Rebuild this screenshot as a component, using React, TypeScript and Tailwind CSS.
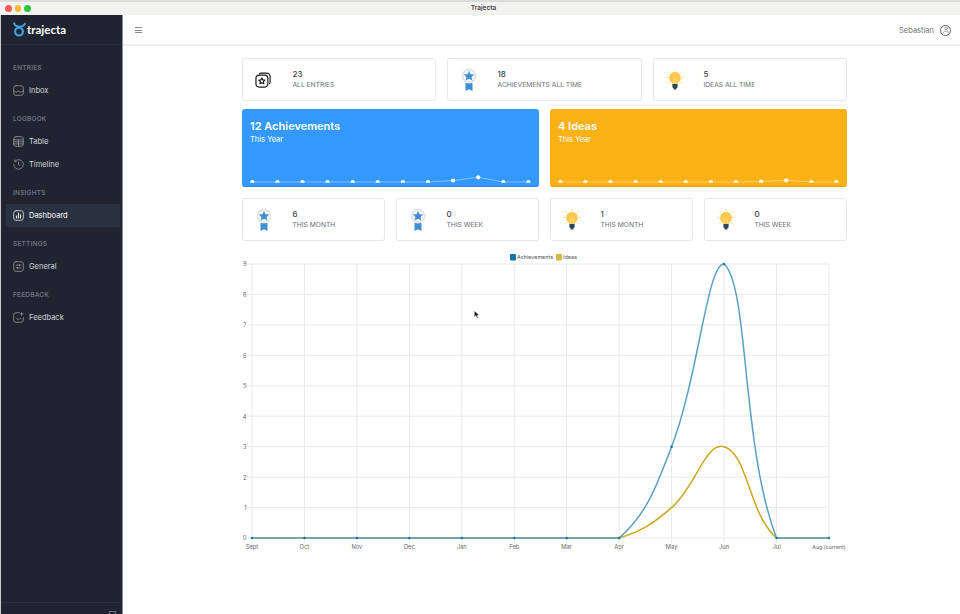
import { User } from "lucide-react";

const font = "font-['Inter','Liberation_Sans',sans-serif]";

type Pt = [number, number];

const months = ["Sept", "Oct", "Nov", "Dec", "Jan", "Feb", "Mar", "Apr", "May", "Jun", "Jul", "Aug (current)"];
const achievements = [0, 0, 0, 0, 0, 0, 0, 0, 3, 9, 0, 0];
const ideas = [0, 0, 0, 0, 0, 0, 0, 0, 1, 3, 0, 0];

const chartX = (i: number) => 10 + i * 52.45;
const chartY = (v: number) => 288 - v * 30.44;

// same spline as chart.js, control points capped to the plot area
function spline(pts: Pt[], minY: number, maxY: number) {
  let d = `M${pts[0][0]} ${pts[0][1]}`;
  const ctrl = pts.map((p, i) => {
    const prev = pts[Math.max(i - 1, 0)];
    const next = pts[Math.min(i + 1, pts.length - 1)];
    const d01 = Math.hypot(p[0] - prev[0], p[1] - prev[1]);
    const d12 = Math.hypot(next[0] - p[0], next[1] - p[1]);
    const total = d01 + d12 || 1;
    const fa = (0.4 * d01) / total;
    const fb = (0.4 * d12) / total;
    const cap = (v: number) => Math.min(maxY, Math.max(minY, v));
    return {
      a: [p[0] - fa * (next[0] - prev[0]), cap(p[1] - fa * (next[1] - prev[1]))],
      b: [p[0] + fb * (next[0] - prev[0]), cap(p[1] + fb * (next[1] - prev[1]))],
    };
  });
  for (let i = 1; i < pts.length; i++) {
    d += `C${ctrl[i - 1].b[0]} ${ctrl[i - 1].b[1]} ${ctrl[i].a[0]} ${ctrl[i].a[1]} ${pts[i][0]} ${pts[i][1]}`;
  }
  return d;
}

function Logo() {
  return (
    <svg viewBox="0 0 13 15" className="w-[13px] h-[15px] shrink-0" fill="none">
      <circle cx="6" cy="9.6" r="3.9" stroke="#3f9fe0" strokeWidth="2.2" />
      <path d="M1 1.4c1 2.4 3.2 3.2 5.4 3.4 2.4.2 4.2-.8 5.6-3" stroke="#3f9fe0" strokeWidth="2" strokeLinecap="round" />
    </svg>
  );
}

function NavIcon({ name }: { name: string }) {
  const common = { fill: "none", stroke: "currentColor", strokeWidth: 1.1, strokeLinecap: "round" as const, strokeLinejoin: "round" as const };
  return (
    <svg viewBox="0 0 16 16" className="w-[11px] h-[11px] shrink-0 block" {...common}>
      {name === "inbox" && (
        <>
          <rect x="1" y="1" width="14" height="14" rx="3.4" />
          <path d="M1 8.5c1.6 0 2 2 3.5 2 1.5 0 2-1.6 3.5-1.6s2 1.6 3.5 1.6c1.5 0 1.9-2 3.5-2" />
        </>
      )}
      {name === "table" && (
        <>
          <rect x="1" y="1" width="14" height="14" rx="3.4" />
          <path d="M1 5.5h14M1 8.5h14M1 11.5h14M8 5.5V15" />
        </>
      )}
      {name === "timeline" && (
        <>
          <path d="M2.6 3.4A7 7 0 1 1 1 8" />
          <path d="M8 4.5V8l2.2 1.6M2.6 1.5v2h2" />
        </>
      )}
      {name === "dashboard" && (
        <>
          <rect x="1" y="1" width="14" height="14" rx="3.4" />
          <path d="M5 11.5V8.5M8 11.5V4.5M11 11.5V7" strokeWidth="1.6" />
        </>
      )}
      {name === "general" && (
        <>
          <rect x="1" y="1" width="14" height="14" rx="3.4" />
          <path d="M4.5 6h7M4.5 10h7" />
          <path d="M9.5 5.5v1M6.5 9.5v1" strokeWidth="1.5" />
        </>
      )}
      {name === "feedback" && (
        <>
          <path d="M9 1H4.5A3.5 3.5 0 0 0 1 4.5v7A3.5 3.5 0 0 0 4.5 15h7a3.5 3.5 0 0 0 3.5-3.5V8" />
          <path d="M12.5 .8v4M10.5 2.8h4M5 9.5c1.5 1.6 4.5 1.6 6 0" />
        </>
      )}
    </svg>
  );
}

function Medal() {
  return (
    <svg viewBox="0 0 16 24" className="w-[16px] h-[24px]">
      <path d="M4.5 15h7v8l-3.5-1.8L4.5 23z" fill="#3f8fd2" />
      <circle cx="8" cy="8" r="7.4" fill="#e2e4e8" />
      <circle cx="8" cy="8" r="5.6" fill="#f5f6f7" />
      <path d="M8 2.9l1.5 3.3 3.7.4-2.7 2.4.8 3.6L8 10.8l-3.3 1.8.8-3.6-2.7-2.4 3.7-.4z" fill="#3f8fd2" />
    </svg>
  );
}

function Bulb() {
  return (
    <svg viewBox="0 0 18 22" className="w-[18px] h-[22px]">
      <path d="M9 .4v1.6M2.6 2.6l1.2 1.2M15.4 2.6l-1.2 1.2M.2 8.5h1.8M16 8.5h1.8M2.6 14.4l1.2-1M15.4 14.4l-1.2-1" stroke="#fcd777" strokeWidth="0.9" strokeLinecap="round" />
      <path d="M9 3a5.8 5.8 0 0 0-3.4 10.5c.5.4.7.9.7 1.5h5.4c0-.6.2-1.1.7-1.5A5.8 5.8 0 0 0 9 3z" fill="#fcc94f" />
      <path d="M7.6 15v-4.6h2.8V15" fill="none" stroke="#f8e2a8" strokeWidth="0.6" />
      <path d="M6.4 15h5.2v3.2l-1.2 1v1.2H7.6v-1.2l-1.2-1z" fill="#2b465e" />
    </svg>
  );
}

function Stack() {
  return (
    <svg viewBox="0 0 18 18" className="w-[17px] h-[17px]" fill="none" stroke="#1a1a1a" strokeWidth="1.25" strokeLinejoin="round">
      <rect x="1" y="4.4" width="12.6" height="12.6" rx="3.4" />
      <path d="M4.4 3.2A3 3 0 0 1 6.6 2.3h5.6a3.8 3.8 0 0 1 3.8 3.8v5.6a3 3 0 0 1-.9 2.2" />
      <path d="M7.3 7.4l1 2 2.2.3-1.6 1.5.4 2.2-2-1-2 1 .4-2.2-1.6-1.5 2.2-.3z" />
    </svg>
  );
}

function StatCard({ icon, value, label, className }: { icon: React.ReactNode; value: string; label: string; className: string }) {
  return (
    <div className={`h-[43px] flex items-center border border-[#e7e8ea] rounded-[3px] bg-white ${className}`}>
      <div className="w-[49.5px] shrink-0 flex justify-center pr-[8px]">{icon}</div>
      <div className="flex flex-col">
        <span className="text-[8px] leading-[11px] font-medium text-[#3c4048]">{value}</span>
        <span className="text-[6.7px] leading-[11px] font-normal text-[#6b7078] whitespace-nowrap">{label}</span>
      </div>
    </div>
  );
}

function Spark({ ys, id }: { ys: number[]; id: string }) {
  const xs = ys.map((_, i) => 10.3 + i * 25.1);
  return (
    <svg viewBox="0 0 297 78" className="absolute inset-0 w-[297px] h-[78px]" fill="none">
      <clipPath id={id}>
        <rect x="0" y="0" width="297" height="73.7" />
      </clipPath>
      <g clipPath={`url(#${id})`}>
        <polyline points={ys.map((y, i) => `${xs[i]},${y}`).join(" ")} stroke="#ffffff" strokeOpacity="0.5" strokeWidth="0.8" />
        {ys.map((y, i) => (
          <circle key={i} cx={xs[i]} cy={y} r="2.1" fill="#ffffff" />
        ))}
      </g>
    </svg>
  );
}

function BigCard({ title, color, border, ys, id }: { title: string; color: string; border: string; ys: number[]; id: string }) {
  return (
    <div className={`relative h-[78px] w-[297px] rounded-[3px] border-b ${color} ${border} px-[8px] pt-[10px] text-white`}>
      <div className="text-[11px] leading-[14px] font-semibold">{title}</div>
      <div className="text-[7.5px] leading-[10px] mt-[2px]">This Year</div>
      <Spark ys={ys} id={id} />
    </div>
  );
}

function Chart() {
  const aPts = achievements.map((v, i): Pt => [chartX(i), chartY(v)]);
  const iPts = ideas.map((v, i): Pt => [chartX(i), chartY(v)]);
  return (
    <svg viewBox="0 0 605 302" className="w-[605px] h-[302px] block" style={{ fontFamily: "Inter, 'Liberation Sans', sans-serif" }}>
      {Array.from({ length: 10 }, (_, v) => (
        <g key={v}>
          <line x1="5" x2={chartX(11)} y1={chartY(v)} y2={chartY(v)} stroke="#e8e9eb" strokeWidth="1" />
          <text x="4.5" y={chartY(v) + 2.4} fontSize="5.8" textAnchor="end" fill="#666">{v}</text>
        </g>
      ))}
      {months.map((m, i) => (
        <g key={m}>
          <line x1={chartX(i)} x2={chartX(i)} y1="14" y2="293" stroke="#e8e9eb" strokeWidth="1" />
          <text x={chartX(i)} y="298.8" fontSize={i === 11 ? 5.3 : 5.8} textAnchor="middle" fill="#666">{m}</text>
        </g>
      ))}
      <path d={spline(iPts, 14, 288)} fill="none" stroke="#c9a81f" strokeWidth="1.5" />
      <path d={spline(aPts, 14, 288)} fill="none" stroke="#5b9fc2" strokeWidth="1.5" />
      {aPts.map((p, i) => (
        <circle key={i} cx={p[0]} cy={p[1]} r="1.2" fill="#0d75a8" />
      ))}
      <rect x="268" y="4" width="6" height="6.5" rx="1" fill="#0d75a8" />
      <text x="275" y="9.2" fontSize="5.4" fill="#555">Achievements</text>
      <rect x="314" y="4" width="6" height="6.5" rx="1" fill="#d2b84a" />
      <text x="321" y="9.2" fontSize="5.4" fill="#555">Ideas</text>
    </svg>
  );
}

const sections = [
  { label: "ENTRIES", items: [{ name: "inbox", text: "Inbox" }] },
  { label: "LOGBOOK", items: [{ name: "table", text: "Table" }, { name: "timeline", text: "Timeline" }] },
  { label: "INSIGHTS", items: [{ name: "dashboard", text: "Dashboard", active: true }] },
  { label: "SETTINGS", items: [{ name: "general", text: "General" }] },
  { label: "FEEDBACK", items: [{ name: "feedback", text: "Feedback" }] },
];

export default function App() {
  return (
    <div className={`relative w-[960px] h-[614px] overflow-hidden bg-white flex flex-col ${font}`}>
      {/* Title bar */}
      <div className="h-[15px] shrink-0 bg-[#f2f2f0] border-t-2 border-[#dcdcdc] flex items-center relative pl-[5px] gap-[3px]">
        <span className="w-[6.5px] h-[6.5px] rounded-full bg-[#fc5b57]" />
        <span className="w-[6.5px] h-[6.5px] rounded-full bg-[#fdbb2f]" />
        <span className="w-[6.5px] h-[6.5px] rounded-full bg-[#29c73f]" />
        <span className="absolute left-0 right-0 text-center pl-[7px] text-[6.5px] leading-[11px] font-semibold text-[#4a4a4a]">Trajecta</span>
      </div>

      <div className="flex-1 flex min-h-0">
        {/* Sidebar */}
        <aside className="w-[123px] shrink-0 bg-[#1f2430] border-l border-[#c9cbd0] border-r border-r-[#8c909a] flex flex-col relative">
          <div className="h-[30px] shrink-0 flex items-center pl-[12px] gap-[1px] border-b border-[#262b38]">
            <Logo />
            <span className="text-[11.5px] font-bold text-white font-['Lato',sans-serif] leading-none">trajecta</span>
          </div>
          <nav className="pt-[18px]">
            {sections.map((s) => (
              <div key={s.label} className="mb-[12px]">
                <div className="h-[11px] mb-[5px] pl-[12px] text-[6.5px] leading-[11px] font-semibold tracking-[0.2px] text-[#6c7280]">{s.label}</div>
                {s.items.map((it: { name: string; text: string; active?: boolean }) => (
                  <div
                    key={it.text}
                    className={`h-[23px] ml-[5px] mr-[2px] pl-[7px] flex items-center gap-[5px] text-[7.5px] leading-[22px] font-normal ${it.active ? "bg-[#2a3140] text-white" : "text-[#d5d7db]"}`}
                  >
                    <span className={it.active ? "text-[#e8e9ec]" : "text-[#9a9ea8]"}>
                      <NavIcon name={it.name} />
                    </span>
                    {it.text}
                  </div>
                ))}
              </div>
            ))}
          </nav>
          <div className="mt-auto h-[12px] border-t border-[#2a2f3c] flex justify-end items-end pr-[6px]">
            <span className="w-[7px] h-[3px] border border-b-0 border-[#6c7280]" />
          </div>
        </aside>

        {/* Main */}
        <main className="flex-1 min-w-0 flex flex-col">
          <header className="h-[31px] shrink-0 border-b-2 border-[#ececee] flex items-center pl-[12px] pr-[9px] pt-[1px]">
            <div className="w-[7px] flex flex-col gap-[1.5px]">
              <span className="h-px bg-[#8a8d93]" />
              <span className="h-px bg-[#8a8d93]" />
              <span className="h-px bg-[#8a8d93]" />
            </div>
            <span className="ml-auto text-[7.5px] text-[#6f7278] translate-y-[1px]">Sebastian</span>
            <span className="ml-[6px] w-[11px] h-[11px] rounded-full border border-[#63666c] flex items-center justify-center text-[#63666c]">
              <User size={8} strokeWidth={1.6} />
            </span>
          </header>

          <div className="w-[605px] ml-[119px] pt-[12px]">
            <div className="flex gap-[11px]">
              <StatCard className="w-[194px]" icon={<Stack />} value="23" label="ALL ENTRIES" />
              <StatCard className="w-[195px]" icon={<Medal />} value="18" label="ACHIEVEMENTS ALL TIME" />
              <StatCard className="w-[194px]" icon={<Bulb />} value="5" label="IDEAS ALL TIME" />
            </div>
            <div className="flex gap-[11px] mt-[8px]">
              <BigCard id="spark-a" title="12 Achievements" color="bg-[#3399ff]" border="border-[#2f86dc]" ys={[73, 73, 73, 73, 73, 73, 73, 73, 71.5, 68.3, 73, 73]} />
              <BigCard id="spark-i" title="4 Ideas" color="bg-[#f9b115]" border="border-[#dda01c]" ys={[73, 73, 73, 73, 73, 73, 73, 73, 72.6, 71.3, 73, 73]} />
            </div>
            <div className="flex gap-[11px] mt-[11px]">
              <StatCard className="w-[143px]" icon={<Medal />} value="6" label="THIS MONTH" />
              <StatCard className="w-[143px]" icon={<Medal />} value="0" label="THIS WEEK" />
              <StatCard className="w-[143px]" icon={<Bulb />} value="1" label="THIS MONTH" />
              <StatCard className="w-[143px]" icon={<Bulb />} value="0" label="THIS WEEK" />
            </div>
            <div className="mt-[9px]">
              <Chart />
            </div>
          </div>
        </main>
      </div>

      {/* Mouse pointer */}
      <svg viewBox="0 0 8 11" className="absolute left-[474px] top-[310px] w-[6px] h-[9px]">
        <path d="M.5.5v8.2l2-1.8 1.4 3.2 1.4-.6L4 6.4h2.8z" fill="#111" stroke="#fff" strokeWidth="0.5" />
      </svg>
    </div>
  );
}
